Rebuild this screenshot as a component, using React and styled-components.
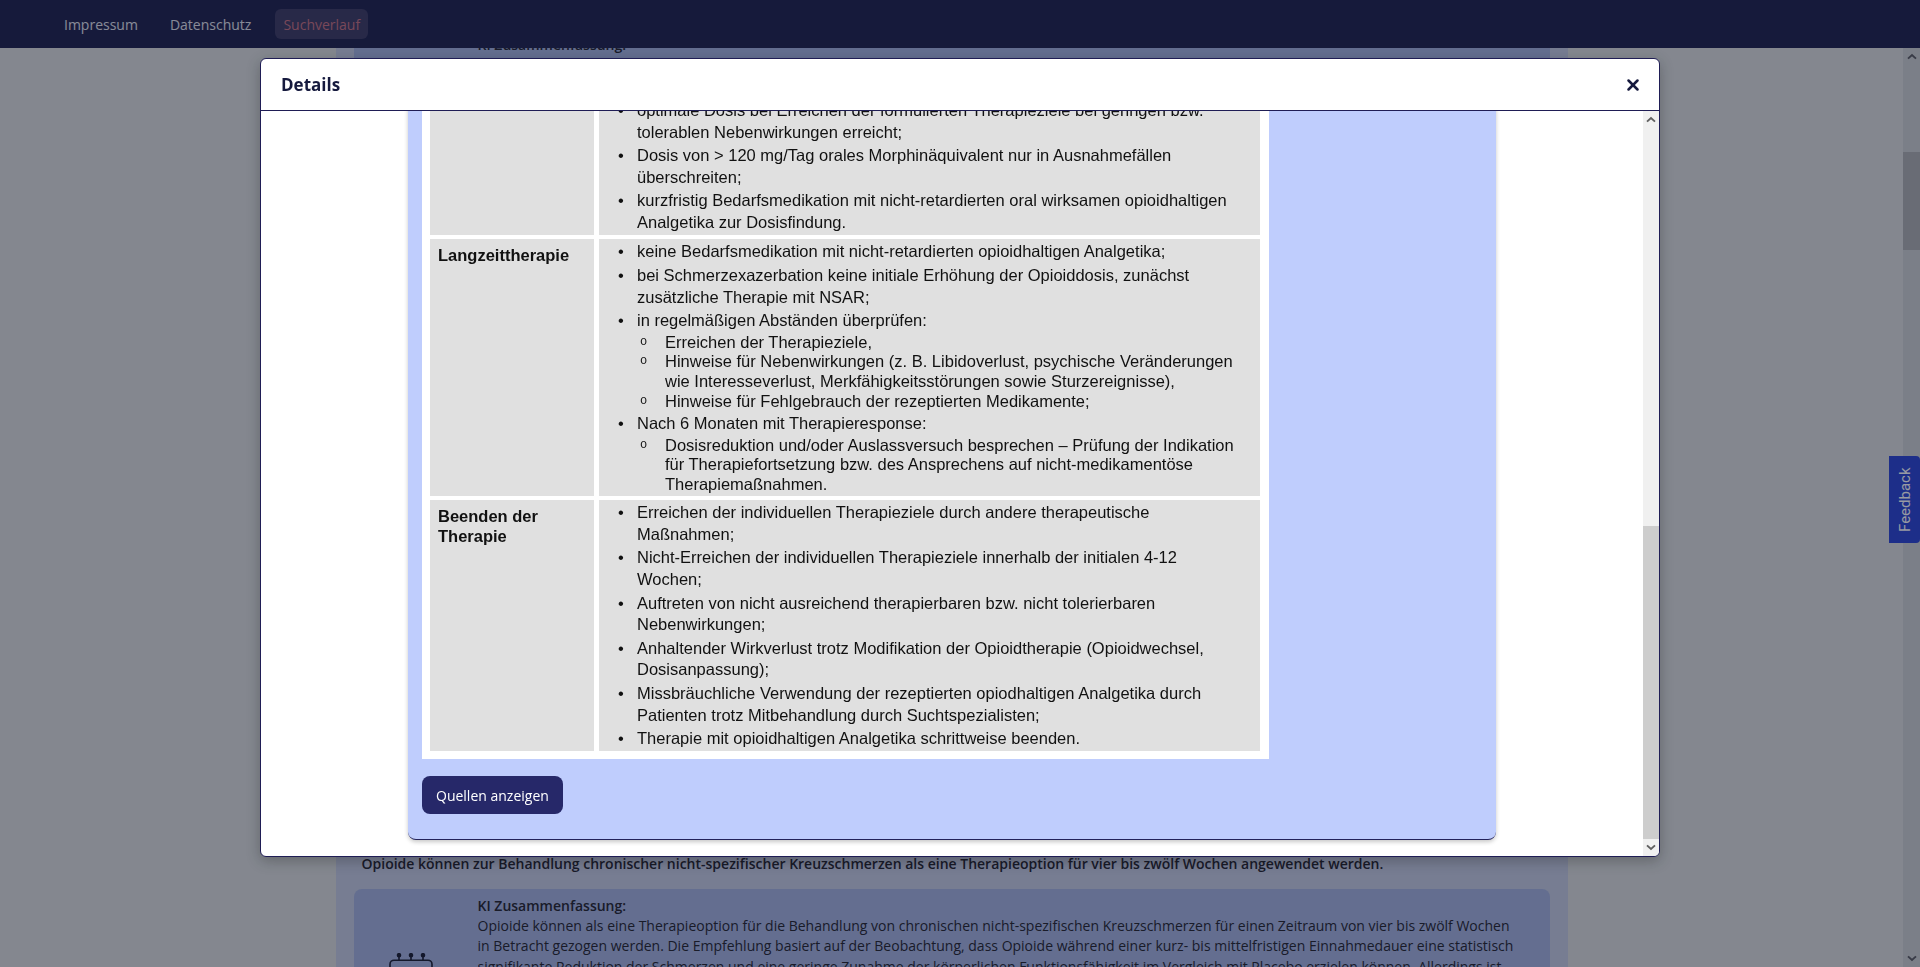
import React, { useLayoutEffect, useRef } from 'react';
import styled, { createGlobalStyle } from 'styled-components';
import { X } from 'lucide-react';

const GlobalStyle = createGlobalStyle`
  html, body {
    margin: 0;
    padding: 0;
    height: 100%;
    overflow: hidden;
  }
  body {
    font-family: 'Open Sans', 'Noto Sans', sans-serif;
  }
  #root {
    height: 100%;
  }
`;

/* ---------- classic scrollbar rail ---------- */

const ScrollRail = styled.div`
  flex: none;
  width: ${(p) => p.$width}px;
  display: flex;
  flex-direction: column;
  background: ${(p) => p.$track};
  color: ${(p) => p.$arrow};
`;

const RailButton = styled.div`
  flex: none;
  height: 17px;
  display: flex;
  align-items: center;
  justify-content: center;
`;

const RailTrack = styled.div`
  flex: 1;
  display: flex;
  flex-direction: column;
  justify-content: ${(p) => (p.$atEnd ? 'flex-end' : 'flex-start')};
`;

const RailThumb = styled.div`
  flex: none;
  height: ${(p) => p.$size}px;
  margin-top: ${(p) => p.$offset || 0}px;
  background: ${(p) => p.$color};
`;

function Chevron({ up }) {
  return (
    <svg width="10" height="7" viewBox="0 0 10 7" fill="none" stroke="currentColor" strokeWidth="1.9">
      <path d={up ? 'M1 5.6L5 2l4 3.6' : 'M1 1.4L5 5l4-3.6'} />
    </svg>
  );
}

function Scrollbar({ width, track, thumb, arrow, size, offset, atEnd }) {
  return (
    <ScrollRail $width={width} $track={track} $arrow={arrow}>
      <RailButton>
        <Chevron up />
      </RailButton>
      <RailTrack $atEnd={atEnd}>
        <RailThumb $size={size} $offset={offset} $color={thumb} />
      </RailTrack>
      <RailButton>
        <Chevron />
      </RailButton>
    </ScrollRail>
  );
}

/* ---------- page behind the dialog ---------- */

const Shell = styled.div`
  height: 100vh;
  display: flex;
  flex-direction: column;
  background: #dcdfde;
`;

const NavBar = styled.nav`
  flex: none;
  height: 48px;
  display: flex;
  align-items: center;
  gap: 16px;
  padding-left: 56px;
  background: #20234f;
`;

const NavLink = styled.a`
  height: 30px;
  display: flex;
  align-items: center;
  padding: 0 8px;
  border-radius: 6px;
  font-size: 14px;
  color: ${(p) => (p.$active ? '#c87282' : '#e2e3ec')};
  background: ${(p) => (p.$active ? '#3e3d64' : 'transparent')};
  text-decoration: none;
`;

const PageRow = styled.div`
  flex: 1;
  min-height: 0;
  display: flex;
`;

const PageScroll = styled.div`
  flex: 1;
  min-width: 0;
  position: relative;
  overflow-y: auto;
  scrollbar-width: none;
  &::-webkit-scrollbar {
    display: none;
  }
`;

const Container = styled.main`
  width: 1232px;
  margin: 0 auto;
  padding: 24px 18px 40px;
  box-sizing: border-box;
  background: #c6cde3;
`;

const PageTitle = styled.h1`
  margin: 8px 8px 24px;
  font-size: 22px;
  font-weight: 700;
  color: #262630;
`;

const ResultItem = styled.article`
  padding-bottom: 27px;
`;

const Statement = styled.p`
  margin: 0 0 15px;
  padding: 0 8px;
  font-size: 14px;
  font-weight: 600;
  line-height: 20px;
  color: #262630;
`;

const SummaryCard = styled.div`
  display: grid;
  grid-template-columns: 114px 1fr;
  column-gap: 10px;
  padding: 7px 32px 14px 0;
  border-radius: 8px;
  background: #a5b4e0;
  color: #262630;
`;

const IconCell = styled.div`
  display: flex;
  align-items: center;
  justify-content: center;
`;

const SummaryLabel = styled.div`
  font-size: 14px;
  font-weight: 600;
  line-height: 20px;
`;

const SummaryText = styled.p`
  margin: 0;
  font-size: 14px;
  line-height: 20.4px;
  display: -webkit-box;
  -webkit-box-orient: vertical;
  -webkit-line-clamp: ${(p) => p.$lines};
  overflow: hidden;
`;

const FeedbackTab = styled.div`
  position: fixed;
  right: 0;
  top: 456px;
  width: 31px;
  height: 87px;
  display: flex;
  align-items: center;
  justify-content: center;
  border-radius: 4px 0 0 4px;
  background: #2b45d4;
  color: #fff;
  font-family: Roboto, 'Open Sans', sans-serif;
  font-size: 15px;
  writing-mode: vertical-rl;
  transform: rotate(180deg);
`;

/* ---------- dialog ---------- */

const Overlay = styled.div`
  position: fixed;
  inset: 0;
  z-index: 10;
  display: flex;
  justify-content: center;
  align-items: flex-start;
  padding-top: 58px;
  background: rgba(10, 14, 34, 0.42);
`;

const Dialog = styled.section`
  width: 1400px;
  height: 799px;
  box-sizing: border-box;
  display: flex;
  flex-direction: column;
  border: 1px solid #1f1d55;
  border-radius: 6px;
  background: #fff;
  box-shadow: 0 4px 14px rgba(0, 0, 0, 0.25);
  overflow: hidden;
`;

const DialogHeader = styled.header`
  flex: none;
  height: 51px;
  display: flex;
  align-items: center;
  justify-content: space-between;
  padding: 0 17px 0 20px;
  border-bottom: 1px solid #1f1d55;
`;

const DialogTitle = styled.h2`
  margin: 0;
  font-size: 17px;
  font-weight: 700;
  color: #161a3e;
`;

const CloseButton = styled.button`
  display: flex;
  padding: 0;
  border: none;
  background: none;
  color: #161a3e;
  cursor: pointer;
`;

const DialogRow = styled.div`
  flex: 1;
  min-height: 0;
  display: flex;
`;

const DialogBody = styled.div`
  flex: 1;
  min-width: 0;
  overflow-y: auto;
  padding: 16px 0;
  scrollbar-width: none;
  &::-webkit-scrollbar {
    display: none;
  }
`;

const SourceCard = styled.div`
  width: 1088px;
  margin: 0 auto;
  box-sizing: border-box;
  padding: 20px 14px 25px;
  border-radius: 8px;
  border-bottom: 1px solid #23225a;
  background: #bfcdfd;
  box-shadow: 0 2px 4px rgba(0, 0, 0, 0.22);
`;

const SourceStatement = styled.h3`
  margin: 0 0 10px;
  font-size: 16px;
  font-weight: 700;
  line-height: 22px;
  color: #161a3e;
`;

const SourceMeta = styled.div`
  margin-bottom: 14px;
  font-size: 13px;
  color: #3a3f66;
`;

const SourceText = styled.p`
  margin: 0 0 16px;
  font-size: 14px;
  line-height: 21px;
  color: #1c1f33;
`;

const TableImage = styled.div`
  display: grid;
  grid-template-columns: 164px 661px;
  gap: 4px 5px;
  width: fit-content;
  padding: 8px 9px 8px 8px;
  background: #fff;
  font-family: 'Liberation Sans', Arial, sans-serif;
  font-size: 16.5px;
  color: #111;
`;

const PhaseCell = styled.div`
  padding: 6px 8px 0;
  background: ${(p) => (p.$head ? '#c9c9c9' : '#e0e0e0')};
  font-weight: 700;
  line-height: 20px;
`;

const MeasureCell = styled.div`
  padding: ${(p) => (p.$head ? '6px 8px 5px' : '2px 0 0')};
  background: ${(p) => (p.$head ? '#c9c9c9' : '#e0e0e0')};
  font-weight: ${(p) => (p.$head ? 700 : 400)};
  line-height: ${(p) => (p.$head ? '20px' : 'normal')};
`;

const BulletList = styled.ul`
  margin: ${(p) => (p.$sub ? '1px 0 0' : '0')};
  padding: 0;
  list-style: none;
`;

const BulletItem = styled.li`
  display: grid;
  grid-template-columns: ${(p) => (p.$sub ? '28px' : '38px')} auto;
  margin-bottom: ${(p) => (p.$sub ? '0' : '1.5px')};
  line-height: ${(p) => (p.$sub ? '19.7px' : '21.8px')};
  white-space: nowrap;
`;

const Marker = styled.span`
  padding-left: ${(p) => (p.$sub ? '3px' : '19px')};
  font-family: ${(p) => (p.$sub ? "'Liberation Mono', monospace" : 'inherit')};
  font-size: ${(p) => (p.$sub ? '12px' : 'inherit')};
`;

const SourceButton = styled.button`
  height: 38px;
  margin-top: 17px;
  padding: 0 14px;
  border: none;
  border-radius: 8px;
  background: #262869;
  color: #fff;
  font-family: 'Open Sans', sans-serif;
  font-size: 14px;
`;

function Lines({ lines }) {
  return lines.map((line, i) => (
    <React.Fragment key={i}>
      {i > 0 && <br />}
      {line}
    </React.Fragment>
  ));
}

function Bullet({ lines, sub, children }) {
  return (
    <BulletItem $sub={sub}>
      <Marker $sub={sub}>{sub ? 'o' : '•'}</Marker>
      <div>
        <Lines lines={lines} />
        {children && <BulletList $sub>{children}</BulletList>}
      </div>
    </BulletItem>
  );
}

function RobotIcon() {
  return (
    <svg width="44" height="48" viewBox="0 0 44 48" fill="none" stroke="#1c1f33" strokeWidth="1.6">
      <circle cx="10" cy="2.2" r="1.5" fill="#1c1f33" />
      <circle cx="22" cy="2.2" r="1.5" fill="#1c1f33" />
      <circle cx="34" cy="2.2" r="1.5" fill="#1c1f33" />
      <path d="M10 3.6v3.6M22 3.6v3.6M34 3.6v3.6" />
      <rect x="1" y="7.2" width="42" height="26" rx="4" />
      <circle cx="14" cy="18.5" r="3" />
      <circle cx="30" cy="18.5" r="3" />
      <path d="M15 26.5h14M17 33.2v4M27 33.2v4" />
      <rect x="6" y="37.2" width="32" height="9.8" rx="3" />
    </svg>
  );
}

const opioidStatement =
  'Opioide können zur Behandlung chronischer nicht-spezifischer Kreuzschmerzen als eine Therapieoption für vier bis zwölf Wochen angewendet werden.';

const opioidSummary =
  'Opioide können als eine Therapieoption für die Behandlung von chronischen nicht-spezifischen Kreuzschmerzen für einen Zeitraum von vier bis zwölf Wochen in Betracht gezogen werden. Die Empfehlung basiert auf der Beobachtung, dass Opioide während einer kurz- bis mittelfristigen Einnahmedauer eine statistisch signifikante Reduktion der Schmerzen und eine geringe Zunahme der körperlichen Funktionsfähigkeit im Vergleich mit Placebo erzielen können. Allerdings ist die Evidenz für eine langfristige Anwendung begrenzt, und es bestehen relevante Risiken wie Abhängigkeit, Toleranzentwicklung, Obstipation, Übelkeit und Sturzgefahr. Vor Beginn der Therapie sollen die Patienten umfassend über Nutzen und Risiken aufgeklärt und gemeinsam realistische Therapieziele vereinbart werden. Die Behandlung sollte in ein multimodales Gesamtkonzept eingebettet sein, das aktivierende Maßnahmen wie Bewegungstherapie und edukative Elemente einschließt. Daher sollte die Therapie regelmäßig überprüft und bei Nichterreichen der individuellen Therapieziele innerhalb von vier bis zwölf Wochen schrittweise beendet werden. Eine Fortführung über diesen Zeitraum hinaus ist nur bei nachgewiesener Wirksamkeit und guter Verträglichkeit gerechtfertigt.';

const otherResults = [
  {
    statement:
      'Bei akuten nicht-spezifischen Kreuzschmerzen sollen Betroffene angehalten werden, körperliche Aktivitäten so weit wie möglich beizubehalten.',
    summary:
      'Patientinnen und Patienten mit akuten nicht-spezifischen Kreuzschmerzen sollen ermutigt werden, ihre gewohnten Aktivitäten so weit wie möglich fortzuführen. Bettruhe wird nicht empfohlen, da sie die Genesung verzögern und die Chronifizierung begünstigen kann. Die Beibehaltung der Aktivität wirkt sich positiv auf Schmerz und Funktionsfähigkeit aus und verkürzt die Dauer der Arbeitsunfähigkeit. Eine frühzeitige Rückkehr an den Arbeitsplatz sollte aktiv unterstützt werden, gegebenenfalls mit angepassten Tätigkeiten. Ergänzend können Informationen über den meist günstigen Verlauf der Beschwerden die Angst vor Bewegung reduzieren und so die Aktivität fördern. Wärmeanwendungen können kurzfristig zur Linderung beitragen, sofern sie die Aktivierung nicht ersetzen.',
  },
  {
    statement:
      'NSAR können zur Behandlung nicht-spezifischer Kreuzschmerzen in der niedrigsten wirksamen Dosierung eingesetzt werden.',
    summary:
      'NSAR wie Ibuprofen, Diclofenac oder Naproxen können bei nicht-spezifischen Kreuzschmerzen eingesetzt werden, sollten jedoch in der niedrigsten wirksamen Dosis und nur so kurz wie möglich angewendet werden. Vor Beginn der Therapie sind Risikofaktoren für gastrointestinale, kardiovaskuläre und renale Nebenwirkungen zu prüfen. Bei Patienten mit erhöhtem Risiko sollte eine begleitende Magenschutztherapie erwogen werden. Die Wirksamkeit ist im Vergleich zu Placebo moderat, weshalb eine regelmäßige Überprüfung des Therapieerfolgs sinnvoll ist. Eine Kombination verschiedener NSAR wird nicht empfohlen, da sie das Risiko unerwünschter Wirkungen erhöht, ohne die Wirksamkeit zu verbessern. Bei älteren Menschen ist besondere Vorsicht geboten.',
  },
  {
    statement:
      'Paracetamol sollte zur Behandlung akuter nicht-spezifischer Kreuzschmerzen nicht angewendet werden.',
    summary:
      'Für Paracetamol konnte bei akuten nicht-spezifischen Kreuzschmerzen kein relevanter Vorteil gegenüber Placebo nachgewiesen werden. Aufgrund der fehlenden Wirksamkeit und möglicher hepatotoxischer Nebenwirkungen bei höherer Dosierung wird von einer Anwendung abgeraten. Alternativ können nichtmedikamentöse Maßnahmen sowie bei Bedarf NSAR unter Beachtung der Kontraindikationen eingesetzt werden. Die Entscheidung für eine medikamentöse Therapie sollte stets gemeinsam mit den Betroffenen getroffen werden und die individuellen Präferenzen berücksichtigen. Bei fortbestehenden Beschwerden ist eine erneute Beurteilung der Situation einschließlich psychosozialer Risikofaktoren angezeigt, um einer Chronifizierung frühzeitig entgegenzuwirken.',
  },
  {
    statement:
      'Muskelrelaxanzien sollten zur Behandlung nicht-spezifischer Kreuzschmerzen nicht angewendet werden.',
    summary:
      'Muskelrelaxanzien zeigen bei nicht-spezifischen Kreuzschmerzen allenfalls einen geringen kurzfristigen Nutzen, gehen jedoch mit häufigen zentralnervösen Nebenwirkungen wie Benommenheit und Schwindel einher. Zudem besteht bei einigen Wirkstoffen ein Abhängigkeitspotenzial, insbesondere bei Benzodiazepinen. Das Nutzen-Risiko-Verhältnis wird daher als ungünstig bewertet. Stattdessen sollten aktivierende Maßnahmen im Vordergrund stehen, ergänzt durch eine kurzfristige analgetische Therapie, falls diese erforderlich ist. Betroffene sollten darüber informiert werden, dass Muskelverspannungen häufig Folge und nicht Ursache der Schmerzen sind und sich mit zunehmender Bewegung meist von selbst lösen. Eine regelmäßige Neubewertung ist sinnvoll.',
  },
];

// line clamps chosen so the visible parts of the list line up behind the dialog
const pageItems = [
  { ...otherResults[0], lines: 5 },
  { ...otherResults[1], lines: 5 },
  { ...otherResults[2], lines: 5 },
  { ...otherResults[3], lines: 5 },
  { ...otherResults[0], lines: 6 },
  { ...otherResults[1], lines: 5 },
  { ...otherResults[2], lines: 6 },
  { statement: opioidStatement, summary: opioidSummary, lines: 7, anchor: true },
  ...Array.from({ length: 26 }, (_, i) => ({ ...otherResults[i % 4], lines: 5 })),
];

/* ---------- app ---------- */

export default function App() {
  const pageRef = useRef(null);
  const anchorRef = useRef(null);
  const bodyRef = useRef(null);

  useLayoutEffect(() => {
    const align = () => {
      if (pageRef.current && anchorRef.current) {
        pageRef.current.scrollTop = anchorRef.current.offsetTop - 806;
      }
      if (bodyRef.current) {
        bodyRef.current.scrollTop = bodyRef.current.scrollHeight;
      }
    };
    align();
    if (document.fonts && document.fonts.ready) {
      document.fonts.ready.then(align);
    }
  }, []);

  return (
    <>
      <GlobalStyle />
      <Shell>
        <NavBar>
          <NavLink href="#">Impressum</NavLink>
          <NavLink href="#">Datenschutz</NavLink>
          <NavLink href="#" $active>
            Suchverlauf
          </NavLink>
        </NavBar>
        <PageRow>
          <PageScroll ref={pageRef}>
            <Container>
              <PageTitle>Suchergebnisse</PageTitle>
              {pageItems.map((item, i) => (
                <ResultItem key={i}>
                  <Statement ref={item.anchor ? anchorRef : null}>{item.statement}</Statement>
                  <SummaryCard>
                    <IconCell>
                      <RobotIcon />
                    </IconCell>
                    <div>
                      <SummaryLabel>KI Zusammenfassung:</SummaryLabel>
                      <SummaryText $lines={item.lines}>{item.summary}</SummaryText>
                    </div>
                  </SummaryCard>
                </ResultItem>
              ))}
            </Container>
          </PageScroll>
          <Scrollbar width={17} track="#ced1d2" thumb="#aeb0b1" arrow="#5a5c62" size={98} offset={87} />
        </PageRow>
        <FeedbackTab>Feedback</FeedbackTab>
      </Shell>

      <Overlay>
        <Dialog>
          <DialogHeader>
            <DialogTitle>Details</DialogTitle>
            <CloseButton aria-label="Schließen">
              <X size={18} strokeWidth={3.4} />
            </CloseButton>
          </DialogHeader>
          <DialogRow>
            <DialogBody ref={bodyRef}>
              <SourceCard>
                <SourceStatement>{opioidStatement}</SourceStatement>
                <SourceMeta>
                  Nationale VersorgungsLeitlinie Nicht-spezifischer Kreuzschmerz · Empfehlung 6-14 · Empfehlungsgrad ⇔
                </SourceMeta>
                <SourceText>
                  Opioide sind keine Mittel der ersten Wahl bei nicht-spezifischen Kreuzschmerzen. Sie können im Rahmen
                  eines multimodalen Therapiekonzepts eingesetzt werden, wenn nichtmedikamentöse Maßnahmen und
                  nicht-opioide Analgetika nicht ausreichend wirksam sind oder kontraindiziert sind. Die Anwendung
                  sollte zeitlich begrenzt erfolgen und regelmäßig hinsichtlich Wirksamkeit, Verträglichkeit und
                  möglicher Fehlgebrauchsmuster überprüft werden.
                </SourceText>
                <SourceText>
                  Die folgende Übersicht fasst die Anforderungen an eine Therapie mit opioidhaltigen Analgetika in den
                  einzelnen Therapiephasen zusammen. Vor Beginn der Behandlung sind Nutzen und Risiken gemeinsam mit
                  den Patienten abzuwägen und realistische Therapieziele festzulegen.
                </SourceText>
                <TableImage>
                  <PhaseCell $head>Phase</PhaseCell>
                  <MeasureCell $head>Maßnahmen</MeasureCell>
                  <PhaseCell>Indikations&shy;stellung</PhaseCell>
                  <MeasureCell>
                    <BulletList>
                      <Bullet lines={['Ausschöpfung nichtmedikamentöser und nicht-opioider Therapieoptionen;']} />
                      <Bullet lines={['Überprüfung der Indikation und Ausschluss von Kontraindikationen;']} />
                      <Bullet
                        lines={[
                          'Erfassung psychischer Komorbiditäten, eines Suchtrisikos sowie der',
                          'bisherigen Medikation;',
                        ]}
                      />
                      <Bullet lines={['Aufklärung der Patienten über Nutzen und Risiken der Therapie;']} />
                      <Bullet
                        lines={[
                          'gemeinsame Festlegung realistischer Therapieziele (z. B. Schmerzlinderung',
                          'um 30 %, Verbesserung der körperlichen Funktionsfähigkeit);',
                        ]}
                      />
                    </BulletList>
                  </MeasureCell>
                  <PhaseCell>Therapie&shy;einleitung</PhaseCell>
                  <MeasureCell>
                    <BulletList>
                      <Bullet lines={['Vereinbarung eines festen Behandlers und regelmäßiger Kontrolltermine;']} />
                      <Bullet lines={['Hinweis auf eingeschränkte Fahrtüchtigkeit in der Einstellungsphase;']} />
                      <Bullet lines={['Prophylaxe von Obstipation und Übelkeit;']} />
                      <Bullet lines={['Dokumentation von Schmerzintensität und Funktionsfähigkeit;']} />
                    </BulletList>
                  </MeasureCell>
                  <PhaseCell>Titrations&shy;phase</PhaseCell>
                  <MeasureCell>
                    <BulletList>
                      <Bullet lines={['Beginn mit niedriger Dosis, langsame Dosissteigerung;']} />
                      <Bullet lines={['bevorzugt retardierte Opioide nach festem Zeitschema;']} />
                      <Bullet lines={['Überprüfung von Wirksamkeit und Verträglichkeit in kurzen Abständen;']} />
                      <Bullet
                        lines={[
                          'optimale Dosis bei Erreichen der formulierten Therapieziele bei geringen bzw.',
                          'tolerablen Nebenwirkungen erreicht;',
                        ]}
                      />
                      <Bullet
                        lines={[
                          'Dosis von > 120 mg/Tag orales Morphinäquivalent nur in Ausnahmefällen',
                          'überschreiten;',
                        ]}
                      />
                      <Bullet
                        lines={[
                          'kurzfristig Bedarfsmedikation mit nicht-retardierten oral wirksamen opioidhaltigen',
                          'Analgetika zur Dosisfindung.',
                        ]}
                      />
                    </BulletList>
                  </MeasureCell>
                  <PhaseCell>Langzeittherapie</PhaseCell>
                  <MeasureCell>
                    <BulletList>
                      <Bullet lines={['keine Bedarfsmedikation mit nicht-retardierten opioidhaltigen Analgetika;']} />
                      <Bullet
                        lines={[
                          'bei Schmerzexazerbation keine initiale Erhöhung der Opioiddosis, zunächst',
                          'zusätzliche Therapie mit NSAR;',
                        ]}
                      />
                      <Bullet lines={['in regelmäßigen Abständen überprüfen:']}>
                        <Bullet sub lines={['Erreichen der Therapieziele,']} />
                        <Bullet
                          sub
                          lines={[
                            'Hinweise für Nebenwirkungen (z. B. Libidoverlust, psychische Veränderungen',
                            'wie Interesseverlust, Merkfähigkeitsstörungen sowie Sturzereignisse),',
                          ]}
                        />
                        <Bullet sub lines={['Hinweise für Fehlgebrauch der rezeptierten Medikamente;']} />
                      </Bullet>
                      <Bullet lines={['Nach 6 Monaten mit Therapieresponse:']}>
                        <Bullet
                          sub
                          lines={[
                            'Dosisreduktion und/oder Auslassversuch besprechen – Prüfung der Indikation',
                            'für Therapiefortsetzung bzw. des Ansprechens auf nicht-medikamentöse',
                            'Therapiemaßnahmen.',
                          ]}
                        />
                      </Bullet>
                    </BulletList>
                  </MeasureCell>
                  <PhaseCell>
                    Beenden der
                    <br />
                    Therapie
                  </PhaseCell>
                  <MeasureCell>
                    <BulletList>
                      <Bullet
                        lines={[
                          'Erreichen der individuellen Therapieziele durch andere therapeutische',
                          'Maßnahmen;',
                        ]}
                      />
                      <Bullet
                        lines={['Nicht-Erreichen der individuellen Therapieziele innerhalb der initialen 4-12', 'Wochen;']}
                      />
                      <Bullet
                        lines={['Auftreten von nicht ausreichend therapierbaren bzw. nicht tolerierbaren', 'Nebenwirkungen;']}
                      />
                      <Bullet
                        lines={[
                          'Anhaltender Wirkverlust trotz Modifikation der Opioidtherapie (Opioidwechsel,',
                          'Dosisanpassung);',
                        ]}
                      />
                      <Bullet
                        lines={[
                          'Missbräuchliche Verwendung der rezeptierten opiodhaltigen Analgetika durch',
                          'Patienten trotz Mitbehandlung durch Suchtspezialisten;',
                        ]}
                      />
                      <Bullet lines={['Therapie mit opioidhaltigen Analgetika schrittweise beenden.']} />
                    </BulletList>
                  </MeasureCell>
                </TableImage>
                <SourceButton>Quellen anzeigen</SourceButton>
              </SourceCard>
            </DialogBody>
            <Scrollbar width={16} track="#f0f0f0" thumb="#cdcdcd" arrow="#606060" size={313} atEnd />
          </DialogRow>
        </Dialog>
      </Overlay>
    </>
  );
}
